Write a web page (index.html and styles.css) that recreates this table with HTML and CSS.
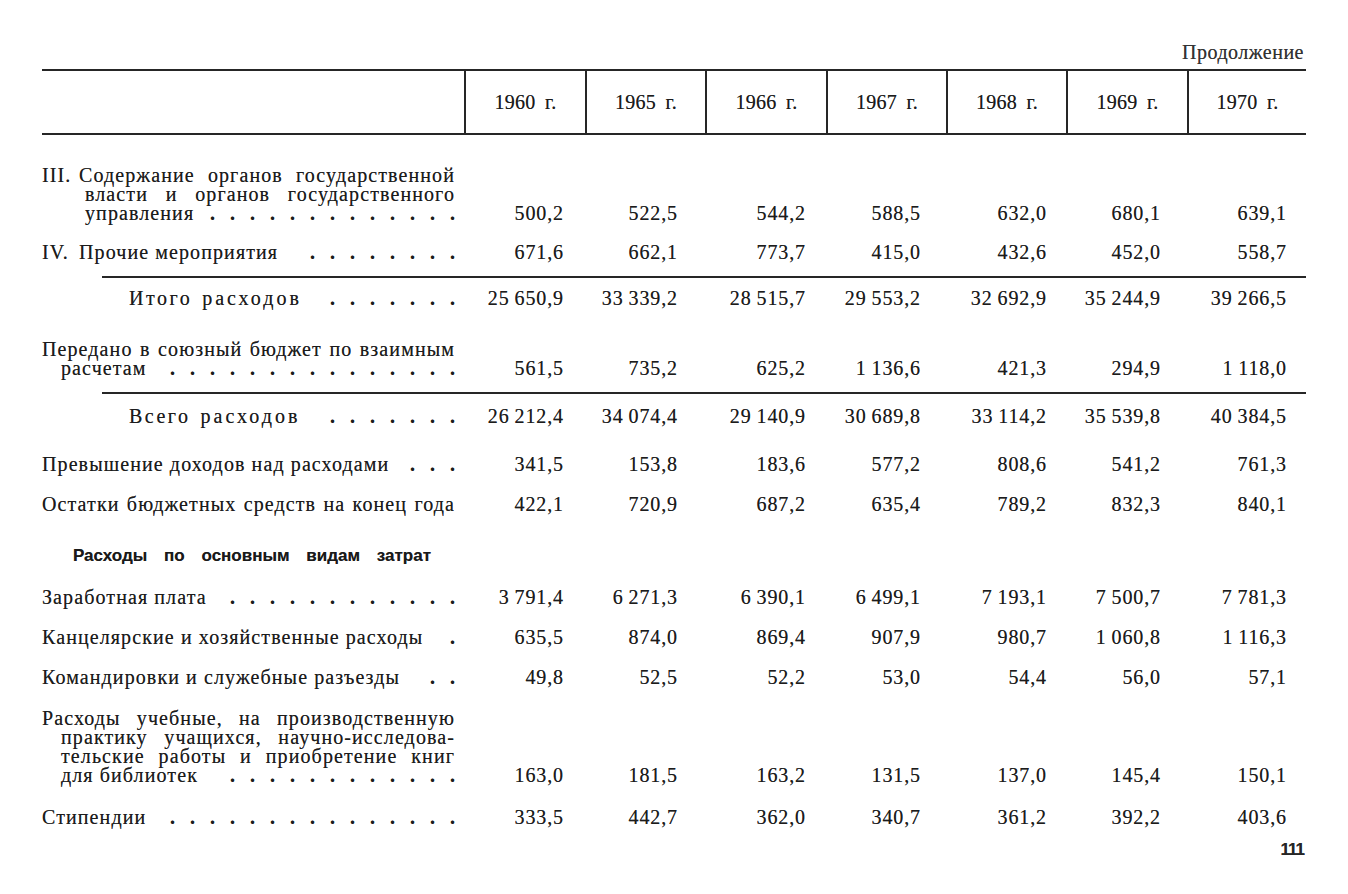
FILE: index.html
```html
<!DOCTYPE html>
<html lang="ru">
<head>
<meta charset="utf-8">
<title>Продолжение</title>
<link rel="stylesheet" href="styles.css">
</head>
<body>
<div class="page">
  <div class="cont">Продолжение</div>
  <table class="tbl">
    <colgroup>
      <col class="c-lab"><col class="c1"><col class="c2"><col class="c3"><col class="c4"><col class="c5"><col class="c6"><col class="c7">
    </colgroup>
    <thead>
      <tr><th class="lab"></th><th>1960 г.</th><th>1965 г.</th><th>1966 г.</th><th>1967 г.</th><th>1968 г.</th><th>1969 г.</th><th>1970 г.</th></tr>
    </thead>
    <tbody>
      <tr class="r-first">
        <td class="lab">
          <div class="ln fl"><span class="rn">III.</span><span class="j grow">Содержание органов государственной</span></div>
          <div class="ln j ind">власти и органов государственного</div>
          <div class="ln fl ind"><span>управления</span><span class="lead"><span>. . . . . . . . . . . . .</span></span></div>
        </td>
        <td>500,2</td><td>522,5</td><td>544,2</td><td>588,5</td><td>632,0</td><td>680,1</td><td>639,1</td>
      </tr>
      <tr class="r-20">
        <td class="lab"><div class="ln fl"><span class="rn">IV.</span><span>Прочие мероприятия</span><span class="lead"><span>. . . . . . . .</span></span></div></td>
        <td>671,6</td><td>662,1</td><td>773,7</td><td>415,0</td><td>432,6</td><td>452,0</td><td>558,7</td>
      </tr>
      <tr class="rule"><td colspan="8"><div class="hr"></div></td></tr>
      <tr class="r-after">
        <td class="lab"><div class="ln fl tot"><span class="sp">Итого</span><span class="sw">расходов</span><span class="lead"><span>. . . . . . .</span></span></div></td>
        <td>25&thinsp;650,9</td><td>33&thinsp;339,2</td><td>28&thinsp;515,7</td><td>29&thinsp;553,2</td><td>32&thinsp;692,9</td><td>35&thinsp;244,9</td><td>39&thinsp;266,5</td>
      </tr>
      <tr class="r-32">
        <td class="lab">
          <div class="ln j">Передано в союзный бюджет по взаимным</div>
          <div class="ln fl ind2"><span>расчетам</span><span class="lead"><span>. . . . . . . . . . . . . . .</span></span></div>
        </td>
        <td>561,5</td><td>735,2</td><td>625,2</td><td>1&thinsp;136,6</td><td>421,3</td><td>294,9</td><td>1&thinsp;118,0</td>
      </tr>
      <tr class="rule"><td colspan="8"><div class="hr"></div></td></tr>
      <tr class="r-after2">
        <td class="lab"><div class="ln fl tot"><span class="sp">Всего</span><span class="sw">расходов</span><span class="lead"><span>. . . . . . .</span></span></div></td>
        <td>26&thinsp;212,4</td><td>34&thinsp;074,4</td><td>29&thinsp;140,9</td><td>30&thinsp;689,8</td><td>33&thinsp;114,2</td><td>35&thinsp;539,8</td><td>40&thinsp;384,5</td>
      </tr>
      <tr class="r-29">
        <td class="lab"><div class="ln fl"><span>Превышение доходов над расходами</span><span class="lead"><span>. . .</span></span></div></td>
        <td>341,5</td><td>153,8</td><td>183,6</td><td>577,2</td><td>808,6</td><td>541,2</td><td>761,3</td>
      </tr>
      <tr class="r-21">
        <td class="lab"><div class="ln j">Остатки бюджетных средств на конец года</div></td>
        <td>422,1</td><td>720,9</td><td>687,2</td><td>635,4</td><td>789,2</td><td>832,3</td><td>840,1</td>
      </tr>
      <tr class="r-32">
        <td class="lab"><div class="ln j hd">Расходы по основным видам затрат</div></td>
        <td></td><td></td><td></td><td></td><td></td><td></td><td></td>
      </tr>
      <tr class="r-23">
        <td class="lab"><div class="ln fl"><span>Заработная плата</span><span class="lead"><span>. . . . . . . . . . . .</span></span></div></td>
        <td>3&thinsp;791,4</td><td>6&thinsp;271,3</td><td>6&thinsp;390,1</td><td>6&thinsp;499,1</td><td>7&thinsp;193,1</td><td>7&thinsp;500,7</td><td>7&thinsp;781,3</td>
      </tr>
      <tr class="r-21">
        <td class="lab"><div class="ln fl"><span>Канцелярские и хозяйственные расходы</span><span class="lead"><span>.</span></span></div></td>
        <td>635,5</td><td>874,0</td><td>869,4</td><td>907,9</td><td>980,7</td><td>1&thinsp;060,8</td><td>1&thinsp;116,3</td>
      </tr>
      <tr class="r-21">
        <td class="lab"><div class="ln fl"><span>Командировки и служебные разъезды</span><span class="lead"><span>. .</span></span></div></td>
        <td>49,8</td><td>52,5</td><td>52,2</td><td>53,0</td><td>54,4</td><td>56,0</td><td>57,1</td>
      </tr>
      <tr class="r-22">
        <td class="lab">
          <div class="ln j">Расходы учебные, на производственную</div>
          <div class="ln j ind2">практику учащихся, научно-исследова-</div>
          <div class="ln j ind2">тельские работы и приобретение книг</div>
          <div class="ln fl ind2"><span>для библиотек</span><span class="lead"><span>. . . . . . . . . . . .</span></span></div>
        </td>
        <td>163,0</td><td>181,5</td><td>163,2</td><td>131,5</td><td>137,0</td><td>145,4</td><td>150,1</td>
      </tr>
      <tr class="r-23">
        <td class="lab"><div class="ln fl"><span>Стипендии</span><span class="lead"><span>. . . . . . . . . . . . . . .</span></span></div></td>
        <td>333,5</td><td>442,7</td><td>362,0</td><td>340,7</td><td>361,2</td><td>392,2</td><td>403,6</td>
      </tr>
    </tbody>
  </table>
  <div class="pnum">111</div>
</div>
</body>
</html>
```

FILE: styles.css
```css
html, body {
  margin: 0;
  padding: 0;
  background: #ffffff;
}

body {
  font-family: "Liberation Serif", "Times New Roman", serif;
  color: #1c1c1c;
  font-size: 20px;
  text-shadow: 0 0 0.6px rgba(0, 0, 0, 0.55);
}

.page {
  width: 1264px;
  padding: 42px 0 0 42px;
}

.cont {
  text-align: right;
  padding-right: 2px;
  font-size: 20px;
  line-height: 20px;
  color: #333333;
  letter-spacing: 0.5px;
}

.tbl {
  width: 1264px;
  margin-top: 7px;
  border-collapse: collapse;
  table-layout: fixed;
  border-top: 2px solid #262626;
}

.c-lab { width: 423px; }
.c1 { width: 121px; }
.c2 { width: 120px; }
.c3 { width: 121px; }
.c4 { width: 120px; }
.c5 { width: 120px; }
.c6 { width: 121px; }
.c7 { width: 118px; }

.tbl thead tr {
  border-bottom: 2px solid #262626;
}

.tbl th {
  height: 62px;
  padding: 0;
  font-weight: normal;
  text-align: center;
  vertical-align: middle;
  border-left: 2px solid #262626;
  word-spacing: 4px;
  letter-spacing: 0.3px;
  line-height: 20px;
}

.tbl th.lab {
  border-left: none;
}

.tbl td {
  padding: 0;
  line-height: 19px;
  vertical-align: bottom;
  text-align: right;
  letter-spacing: 0.9px;
  white-space: nowrap;
}

.tbl td:nth-child(2) { padding-right: 22px; }
.tbl td:nth-child(3) { padding-right: 28px; }
.tbl td:nth-child(4) { padding-right: 21px; }
.tbl td:nth-child(5) { padding-right: 26px; }
.tbl td:nth-child(6) { padding-right: 20px; }
.tbl td:nth-child(7) { padding-right: 27px; }
.tbl td:nth-child(8) { padding-right: 19px; }

.tbl td.lab {
  text-align: left;
  padding-right: 10px;
  letter-spacing: 1.1px;
  white-space: normal;
}

.r-first td { padding-top: 31px; }
.r-20 td { padding-top: 20px; }
.r-21 td { padding-top: 21px; }
.r-22 td { padding-top: 22px; }
.r-23 td { padding-top: 23px; }
.r-29 td { padding-top: 29px; }
.r-32 td { padding-top: 32px; }
.r-after td { padding-top: 11px; }
.r-after2 td { padding-top: 13px; }

.tbl tr.rule td {
  padding: 14px 0 0 0;
}

.hr {
  margin-left: 60px;
  height: 2px;
  background: #262626;
}

.ln {
  line-height: 19px;
  height: 19px;
  white-space: nowrap;
}

.j {
  text-align: justify;
  text-align-last: justify;
  white-space: normal;
}

.fl {
  display: flex;
}

.grow {
  flex: 1 1 0;
  min-width: 0;
}

.rn {
  width: 37px;
  flex: none;
}

.ind {
  padding-left: 43px;
}

.ind2 {
  padding-left: 19px;
}

.lead {
  flex: 1 1 0;
  min-width: 0;
  display: flex;
  justify-content: flex-end;
  margin-left: 10px;
}

.lead span {
  white-space: nowrap;
  word-spacing: 10px;
  letter-spacing: 0;
  font-weight: bold;
  flex: none;
}

.tot {
  padding-left: 87px;
}

.sp {
  letter-spacing: 2.5px;
  margin-right: 10px;
}

.sw {
  letter-spacing: 3px;
}

.hd {
  font-family: "Liberation Sans", Arial, sans-serif;
  font-weight: bold;
  font-size: 17px;
  letter-spacing: 0;
  padding-left: 31px;
  padding-right: 24px;
  color: #1a1a1a;
}

.pnum {
  text-align: right;
  padding-right: 2px;
  margin-top: 13px;
  font-family: "Liberation Sans", Arial, sans-serif;
  font-weight: bold;
  font-size: 17px;
  line-height: 20px;
  letter-spacing: -1px;
  color: #262626;
}
```
